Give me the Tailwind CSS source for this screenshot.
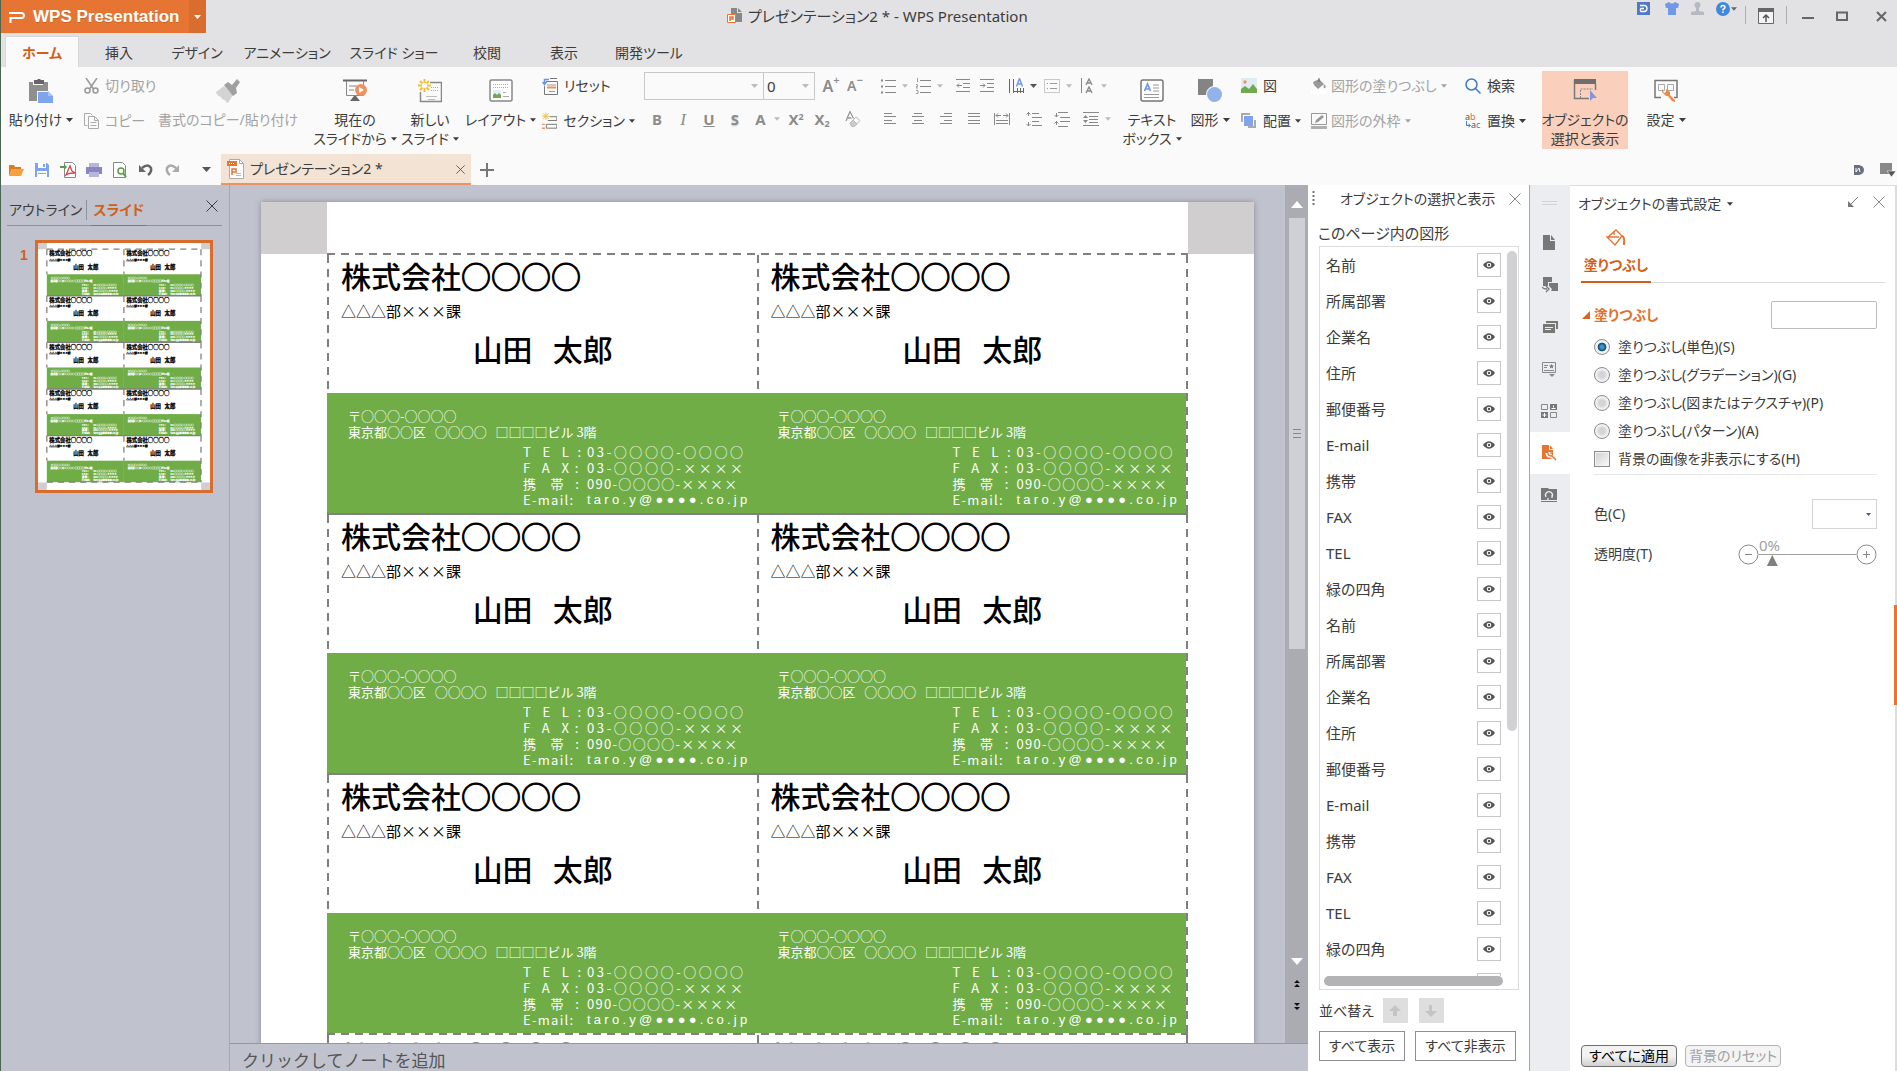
<!DOCTYPE html>
<html lang="ja">
<head>
<meta charset="utf-8">
<title>プレゼンテーション2 * - WPS Presentation</title>
<script src="https://cdn.jsdelivr.net/npm/@tailwindcss/browser@4"></script>
</head>
<body class="flex h-screen flex-col overflow-hidden border-l border-[#4a6652] bg-[#fafafa] font-['Noto_Sans','Noto_Sans_CJK_JP',sans-serif] text-sm leading-5 text-[#3c3c3c] [font-feature-settings:'palt']">

<svg class="hidden">
  <symbol id="caret" viewBox="0 0 7 4"><path d="M0 0h7L3.500 4z" fill="currentColor"/></symbol>
  <symbol id="eye" viewBox="0 0 14 10"><path d="M1 5q6-7.500 12 0q-6 7.500-12 0z" fill="#555"/><circle cx="7" cy="5" r="2.300" fill="#fff"/><circle cx="7" cy="5" r="1.200" fill="#555"/></symbol>
  <symbol id="close" viewBox="0 0 12 12"><path d="M.5.5l11 11M11.500.5l-11 11" stroke="currentColor" fill="none"/></symbol>
  <symbol id="card" viewBox="0 0 430 260" overflow="visible">
    <g stroke="#000" stroke-width="1.500">
      <text x="14" y="35" font-size="30" font-weight="700">株式会社○○○○</text>
      <text x="13" y="64" font-size="15" font-weight="700">△△△部×××課</text>
      <text x="147" y="108" font-size="30" font-weight="700">山田&#160;&#160;&#160;太郎</text>
    </g>
    <rect y="140" width="430" height="120" fill="#70ad47"/>
    <g fill="#fff" stroke="#fff" font-size="13" font-weight="700">
      <text x="21" y="168">〒○○○-○○○○</text>
      <text x="21" y="184">東京都○○区 ○○○○ □□□□ビル3階</text>
      <text x="196" y="205">T E L :</text><text x="260" y="205">03-○○○○-○○○○</text>
      <text x="196" y="221">F A X :</text><text x="260" y="221">03-○○○○-××××</text>
      <text x="196" y="237">携 帯 :</text><text x="260" y="237">090-○○○○-××××</text>
      <text x="196" y="253">E-mail:</text><text x="260" y="253">taro.y@●●●●.co.jp</text>
    </g>
  </symbol>
</svg>

<header class="shrink-0 bg-[#e2e2e4]">
  <div class="flex h-9 justify-between">
    <div class="flex h-[33px]">
      <button class="flex w-[188px] items-center bg-[#e67432] pl-2 font-['Liberation_Sans',sans-serif] text-[17px] font-bold text-white text-shadow-2xs">
        <svg class="mr-2 h-4 w-4" viewBox="0 0 16 16" fill="none" stroke="#fff" stroke-width="2"><path d="M0 4h12q3 0 3 2.500t-3 2.500H1.500V14"/></svg>WPS Presentation
      </button>
      <button class="flex w-[17px] items-center justify-center bg-[#d96c2f] text-white" aria-label="メニュー"><svg class="h-1 w-[7px]"><use href="#caret"/></svg></button>
    </div>
    <div class="flex items-center gap-1.5 pb-1 pl-[521px] text-[15px]">
      <svg class="h-4 w-[15px]" viewBox="0 0 15 16"><path d="M4 0h6v5h5v9H4z" fill="#888"/><path d="M11 0l4 4h-4z" fill="#888"/><path d="M.5 6.500h8v8h-8z" fill="#fff" stroke="#e67432"/><path d="M3 13V9h3v2H3" fill="none" stroke="#e67432" stroke-width="1.500"/></svg>
      <h1>プレゼンテーション2 * - WPS Presentation</h1>
    </div>
    <div class="ml-auto flex gap-3 pr-[10px] pt-[2px] text-[#666]">
      <button aria-label="ドキュメント" class="h-[13px]"><svg class="h-[13px] w-[13px]" viewBox="0 0 13 13"><path d="M0 0h13v13H0z" fill="#5478c8"/><path d="M3 3.500h4a3 3 0 010 6H4a2 2 0 010-3h3" fill="none" stroke="#fff" stroke-width="1.300"/></svg></button>
      <button aria-label="スキン" class="ml-[3px] h-[13px]"><svg class="h-[13px] w-[14px]" viewBox="0 0 14 13"><path d="M4 0q3 3 6 0l4 2-1 4h-2v7H3V6H1L0 2z" fill="#7097e8"/></svg></button>
      <button aria-label="アカウント" class="h-[13px]"><svg class="h-[13px] w-[13px]" viewBox="0 0 13 13"><circle cx="6.500" cy="3" r="3" fill="#b4b9c2"/><path d="M5 5h3v4l5 1v3H0v-3l5-1z" fill="#b4b9c2"/></svg></button>
      <button aria-label="ヘルプ" class="flex h-[13px] items-center gap-px"><svg class="h-[14px] w-[14px]" viewBox="0 0 14 14"><circle cx="7" cy="7" r="7" fill="#4088dc"/><path d="M5 5.500q0-2 2-2t2 1.800q0 1-2 2.200v1M7 9.500v1.600" stroke="#fff" stroke-width="1.500" fill="none"/></svg><svg class="h-1 w-[6px]"><use href="#caret"/></svg></button>
      <span class="-ml-1 mt-1 h-[18px] w-px bg-[#b0b0b4]"></span>
      <button aria-label="リボンを隠す" class="mt-1.5 h-4"><svg class="h-4 w-4" viewBox="0 0 16 16"><path d="M.5.5h15v15H.5z" fill="#f4f4f4" stroke="#666"/><path d="M0 0h16v4H0z" fill="#666"/><path d="M8 14V7M5 10l3-3 3 3" fill="none" stroke="#555" stroke-width="1.500"/></svg></button>
      <span class="mt-1 h-[18px] w-px bg-[#b0b0b4]"></span>
      <button aria-label="最小化" class="ml-[3px] mt-[14px] h-1"><svg class="h-[3px] w-3"><path d="M0 0h12v2H0z" fill="#666"/></svg></button>
      <button aria-label="最大化" class="ml-[10px] mt-[9px] h-[10px]"><svg class="h-[10px] w-3" viewBox="0 0 12 10"><path d="M1 1.500h10v7.500H1z" fill="none" stroke="#666" stroke-width="2"/></svg></button>
      <button aria-label="閉じる" class="ml-4 mt-[9px] h-[11px]"><svg class="h-[11px] w-[11px]" viewBox="0 0 11 11"><path d="M1 1l9 9M10 1l-9 9" stroke="#666" stroke-width="2"/></svg></button>
    </div>
  </div>
  <nav class="flex h-[31px] pl-1 text-center">
    <button class="w-[74px] border border-b-0 border-[#d8d8dc] bg-[#fafafa] pt-0.5 font-bold text-[#d35f17]">ホーム</button>
    <button class="w-20 pt-0.5">挿入</button>
    <button class="w-[76px] pt-0.5">デザイン</button>
    <button class="w-[104px] pt-0.5">アニメーション</button>
    <button class="w-[110px] pt-0.5">スライド ショー</button>
    <button class="w-[76px] pt-0.5">校閲</button>
    <button class="w-[78px] pt-0.5">表示</button>
    <button class="w-[92px] pt-0.5">開発ツール</button>
  </nav>
</header>

<section class="flex h-[87px] shrink-0 whitespace-nowrap pl-[3px] leading-[19px]" aria-label="リボン">
  <button class="mt-1 flex h-[78px] w-[74px] shrink-0 flex-col items-center pt-2">
    <svg class="h-6 w-6" viewBox="0 0 24 24"><path d="M0 3h4v3h10V3h5v9H8v10H0z" fill="#8f8f8f"/><path d="M5 1h3l1-1h2l1 1h3v4H5z" fill="#666"/><path d="M9 13h10l5 4v7H9z" fill="#7fa3ec"/><path d="M19 12l5 5h-5z" fill="#a9c2f5"/></svg>
    <span class="mt-[7px] flex items-center gap-1">貼り付け<svg class="h-1 w-[7px]"><use href="#caret"/></svg></span>
  </button>
  <div class="mt-px flex w-[80px] shrink-0 flex-col pl-1.5 text-[#a3a3a3]">
    <button class="flex h-[35px] items-center gap-1.5"><svg class="h-4 w-[15px]" viewBox="0 0 15 16" fill="none" stroke="#999" stroke-width="1.500"><path d="M2 0l7.500 11M13 0L5.500 11"/><circle cx="3.500" cy="12.500" r="2.500"/><circle cx="11.500" cy="12.500" r="2.500"/></svg>切り取り</button>
    <button class="flex h-[35px] items-center gap-1.5"><svg class="h-4 w-[15px]" viewBox="0 0 15 16" fill="none" stroke="#aaa"><path d="M3.500 12.500h-3V.5h6l2 2M4.500 3.500h6l4 4v8h-10zM10.500 3.500v4h4M6.500 9.500h6M6.500 12.500h6"/></svg>コピー</button>
  </div>
  <button class="mt-1 flex h-[78px] w-[140px] shrink-0 flex-col items-center pt-2 text-[#a3a3a3]">
    <svg class="h-6 w-6" viewBox="0 0 24 24"><path d="M0 13l8-6 9 9-5 8q-2 0-3-3-3 0-4-3-4-1-5-5z" fill="#d3d3d3"/><path d="M8 6l4-3 4 3 5-6 3 3-4 6 1 5-4 3z" fill="#a0a0a0"/></svg>
    <span class="mt-[7px]">書式のコピー/貼り付け</span>
  </button>
  <button class="ml-[15px] mt-1 flex h-[78px] w-[84px] shrink-0 flex-col items-center pt-2">
    <svg class="h-6 w-6" viewBox="0 0 24 24"><path d="M0 1.500h24" stroke="#666" stroke-width="2"/><path d="M3.500 2v14.500h17V2M6 7h8M6 11h5" fill="none" stroke="#888"/><path d="M11 17h2l4 5H7z" fill="#666"/><circle cx="18" cy="11" r="6" fill="#ee9160"/><path d="M16 8l5 3-5 3z" fill="#fff"/></svg>
    <span class="mt-[7px]">現在の</span><span class="flex items-center gap-1">スライドから<svg class="h-1 w-[6px]"><use href="#caret"/></svg></span>
  </button>
  <button class="mt-1 flex h-[78px] w-[66px] shrink-0 flex-col items-center pt-2">
    <svg class="h-6 w-6" viewBox="0 0 24 24"><path d="M12 3.500h11.500v19h-21V13" fill="none" stroke="#888" stroke-width="1.500"/><path d="M13 8.500h8M13 11.500h8" stroke="#aaa" stroke-dasharray="1 1"/><path d="M8 17.500h11M10 20.500h7" stroke="#bbb"/><path d="M6.500 0v4M6.500 9v4M0 6.500h4M9 6.500h4M2 2l2.500 2.500M8.500 8.500L11 11M11 2L8.500 4.500M4.500 8.500L2 11" stroke="#f5bd3a" stroke-width="2"/></svg>
    <span class="mt-[7px]">新しい</span><span class="flex items-center gap-1">スライド<svg class="h-1 w-[6px]"><use href="#caret"/></svg></span>
  </button>
  <button class="mt-1 flex h-[78px] w-[75px] shrink-0 flex-col items-center pt-2">
    <svg class="h-6 w-6" viewBox="0 0 24 24"><rect x="1" y="1" width="22" height="21" rx="1.500" fill="#fff" stroke="#888" stroke-width="1.500"/><path d="M4 5.500h16M4 8.500h16" stroke="#aaa" stroke-dasharray="1 1"/><path d="M4 11h8v8H4z" fill="#e0ecf6"/><path d="M4 19v-3l2-2 2 2 2-2 2 2v3z" fill="#72a850"/><path d="M14 13.500h3M14 17.500h6" stroke="#aaa"/></svg>
    <span class="mt-[7px] flex items-center gap-1">レイアウト<svg class="h-1 w-[6px]"><use href="#caret"/></svg></span>
  </button>
  <div class="mt-px flex w-[97px] shrink-0 flex-col pl-1">
    <button class="flex h-[35px] items-center gap-1.5"><svg class="h-[18px] w-4" viewBox="0 0 16 18" fill="none"><path d="M4 4.500h11.500v13h-13V9" stroke="#777"/><path d="M5 8h9M7 14.500h6" stroke="#999"/><path d="M5 10.500h9" stroke="#ee9160" stroke-width="2"/><path d="M7 2.500H2.500v5M.5 5l2 2.500 2-2.500" stroke="#6c93e6" stroke-width="1.500"/><path d="M8 1.500h7" stroke="#777"/></svg>リセット</button>
    <button class="flex h-[35px] items-center gap-1.5"><svg class="h-[18px] w-4" viewBox="0 0 16 18" fill="none"><path d="M8 4.500h7.500v4H6M4.500 12.500h11v4h-11z" stroke="#777"/><path d="M0 12.500h3M0 16.500h3" stroke="#ee9160" stroke-width="1.500"/><path d="M4 0v8M0 4h8M1 1l6 6M7 1L1 7" stroke="#f5bd3a"/></svg><span class="flex items-center gap-1">セクション<svg class="h-1 w-[6px]"><use href="#caret"/></svg></span></button>
  </div>

  <div class="mt-px w-[241px] shrink-0 pl-[9px] text-[#8c8c8c]">
    <div class="flex h-[35px] items-center">
      <label class="relative flex"><span class="sr-only">フォント</span><select class="h-7 w-[120px] appearance-none border border-[#c8c8c8] bg-[#fafafa] pl-1"><option></option></select><svg class="absolute right-1.5 top-3 h-1 w-[7px] text-[#bbb]"><use href="#caret"/></svg></label>
      <label class="relative -ml-px flex"><span class="sr-only">サイズ</span><select class="h-7 w-[52px] appearance-none border border-[#c8c8c8] bg-[#fafafa] pl-[3px] text-[15px] leading-6 text-[#3c3c3c]"><option>0</option></select><svg class="absolute right-1.5 top-3 h-1 w-[7px] text-[#bbb]"><use href="#caret"/></svg></label>
      <button class="ml-1 flex w-6 items-start justify-center text-base font-semibold leading-6">A<span class="text-[11px] leading-3">+</span></button>
      <button class="flex w-6 items-start justify-center text-sm font-semibold leading-6">A<span class="text-[11px] leading-3">−</span></button>
    </div>
    <div class="flex h-8 items-center text-[15px] font-bold">
      <button class="w-[26px]">B</button>
      <button class="w-[26px] font-['Liberation_Serif',serif] text-[17px] font-normal italic">I</button>
      <button class="w-[26px] underline">U</button>
      <button class="w-[26px] text-shadow-sm">S</button>
      <button class="flex w-[35px] items-center justify-center gap-2 pl-1">A<svg class="h-1 w-[6px] text-[#bbb]"><use href="#caret"/></svg></button>
      <button class="w-[26px]">X<sup class="text-[9px]">2</sup></button>
      <button class="w-[26px]">X<sub class="text-[9px]">2</sub></button>
      <button class="flex w-9 justify-center" aria-label="書式のクリア"><svg class="h-4 w-4" viewBox="0 0 16 16" fill="none" stroke="#999"><path d="M1 10L5 .5l3.500 7M2.500 7h4" stroke-width="1.300"/><path d="M5 12l6-6 4 3.500-5.500 6H7z" stroke="#bbb"/><path d="M5 12l3-3 4 4-2.500 2.500H7z" fill="#ccc" stroke="#bbb"/></svg></button>
    </div>
  </div>

  <div class="mt-px w-[239px] shrink-0 text-[#bbb]">
    <div class="flex h-[35px] items-center">
      <button class="flex w-9 items-center justify-end gap-[6px]" aria-label="箇条書き"><svg class="h-4 w-[15px]" viewBox="0 0 15 16"><path d="M4 2.500h11M4 8.500h11M4 14.500h11" stroke="#888"/><path d="M0 1.500h2v2H0zM0 7.500h2v2H0zM0 13.500h2v2H0z" fill="#888"/></svg><svg class="mr-1 h-1 w-[6px]"><use href="#caret"/></svg></button>
      <button class="flex w-[35px] items-center justify-end gap-[6px]" aria-label="段落番号"><svg class="h-4 w-[15px]" viewBox="0 0 15 16"><path d="M4 2.500h11M4 8.500h11M4 14.500h11" stroke="#888"/><path d="M1.500 0v4M0 6.500h1.500v2H0v1.500h2M0 12.500h2v3H0" fill="none" stroke="#888" stroke-width=".8"/></svg><svg class="mr-1 h-1 w-[6px]"><use href="#caret"/></svg></button>
      <button class="ml-[2px] flex w-7 justify-center" aria-label="インデント解除"><svg class="h-[13px] w-[14px]" viewBox="0 0 14 13" fill="none" stroke="#888"><path d="M0 .5h14M7 4.500h7M7 8.500h7M0 12.500h14M1 6.500h5M3 4.500l-2 2 2 2"/></svg></button>
      <button class="flex w-5 justify-center" aria-label="インデント"><svg class="h-[13px] w-[14px]" viewBox="0 0 14 13" fill="none" stroke="#888"><path d="M0 .5h14M7 4.500h7M7 8.500h7M0 12.500h14M0 6.500h5M3 4.500l2 2-2 2"/></svg></button>
      <button class="flex w-10 items-center justify-end gap-[6px] text-[#555]" aria-label="文字列の方向"><svg class="h-4 w-4" viewBox="0 0 16 16" fill="none"><path d="M1.500 1v14M5.500 1v14M9.500 10v5M12.500 10v5M15.500 10v5M5 13.500h11" stroke="#666"/><path d="M8.500 8.500l3-8 3 8M9.500 6h4" stroke="#7097e8" stroke-width="1.400"/></svg><svg class="h-1 w-[7px]"><use href="#caret"/></svg></button>
      <button class="flex w-[35px] items-center justify-end gap-[6px]" aria-label="文字の配置"><svg class="h-[14px] w-4" viewBox="0 0 16 14" fill="none" stroke="#999"><path d="M.5.5h15v13H.5z" stroke-dasharray="1 1"/><path d="M3 4.500h1M6 4.500h7M3 9.500h1M6 9.500h7"/></svg><svg class="h-1 w-[6px]"><use href="#caret"/></svg></button>
      <button class="flex w-[35px] items-center justify-end gap-[8px]" aria-label="縦書き"><svg class="h-4 w-3" viewBox="0 0 12 16" fill="none" stroke="#888"><path d="M.5 0v15"/><path d="M5 7l3-6 3 6M6 5h4M5 15l3-6 3 6M6 13h4" stroke-width="1.300"/></svg><svg class="h-1 w-[6px]"><use href="#caret"/></svg></button>
    </div>
    <div class="flex h-8 items-center">
      <button class="flex w-7 justify-center" aria-label="左揃え"><svg class="h-3 w-3" viewBox="0 0 12 12"><path d="M0 .5h8M0 3.500h12M0 7.500h8M0 10.500h12" stroke="#888"/></svg></button>
      <button class="flex w-7 justify-center" aria-label="中央揃え"><svg class="h-3 w-3" viewBox="0 0 12 12"><path d="M2 .5h8M0 3.500h12M2 7.500h8M0 10.500h12" stroke="#888"/></svg></button>
      <button class="flex w-7 justify-center" aria-label="右揃え"><svg class="h-3 w-3" viewBox="0 0 12 12"><path d="M4 .5h8M0 3.500h12M4 7.500h8M0 10.500h12" stroke="#888"/></svg></button>
      <button class="flex w-7 justify-center" aria-label="両端揃え"><svg class="h-3 w-3" viewBox="0 0 12 12"><path d="M0 .5h12M0 3.500h12M0 7.500h12M0 10.500h12" stroke="#888"/></svg></button>
      <button class="flex w-7 justify-center" aria-label="均等割り付け"><svg class="h-3 w-4" viewBox="0 0 16 12" fill="none" stroke="#888"><path d="M.5 0v12M15.500 0v12M2 2.500h5M9 2.500h5M4 .5l-2 2 2 2M12 .5l2 2-2 2M2 7.500h12M2 10.500h12"/></svg></button>
      <button class="ml-1 flex w-7 justify-center" aria-label="段落前"><svg class="h-[15px] w-4" viewBox="0 0 16 15" fill="none" stroke="#888"><path d="M6 1.500h7M6 5.500h10M6 9.500h7M6 13.500h10M2.500 0v4M2.500 10v4M.5 2.500l2-2 2 2M.5 12l2 2 2-2"/></svg></button>
      <button class="flex w-[27px] justify-center" aria-label="段落後"><svg class="h-[15px] w-4" viewBox="0 0 16 15" fill="none" stroke="#888"><path d="M4 .5h10M6 5.500h10M6 9.500h10M4 14.500h10M2.500 1v4M2.500 9v4M.5 3l2 2 2-2M.5 11.500l2-2 2 2"/></svg></button>
      <button class="flex w-[36px] items-center justify-end gap-[6px]" aria-label="行間"><svg class="h-[14px] w-4" viewBox="0 0 16 14" fill="none" stroke="#888"><path d="M0 .5h16M6 4.500h9M6 7.500h9M6 10.500h9M0 13.500h16"/><path d="M0 6l2.500-3L5 6zM0 8l2.500 3L5 8z" fill="#888" stroke="none"/></svg><svg class="h-1 w-[6px]"><use href="#caret"/></svg></button>
    </div>
  </div>

  <button class="ml-[6px] mt-1 flex h-[78px] w-[62px] shrink-0 flex-col items-center pt-2">
    <svg class="h-6 w-6" viewBox="0 0 24 24"><rect x="1" y="1" width="22" height="21" rx="2" fill="#fff" stroke="#777" stroke-width="1.500"/><path d="M4.500 12l3-7 3 7M5.500 10h4" fill="none" stroke="#7097e8" stroke-width="1.700"/><path d="M13 6h6M13 9h6M13 12h6M4 15.500h15M4 18.500h15" stroke="#999"/></svg>
    <span class="mt-[7px]">テキスト</span><span class="flex items-center gap-1">ボックス<svg class="h-1 w-[6px]"><use href="#caret"/></svg></span>
  </button>
  <button class="mt-1 flex h-[78px] w-[54px] shrink-0 flex-col items-center pt-2">
    <svg class="h-6 w-6" viewBox="0 0 24 24"><path d="M0 0h15v7q-7 2-7 9H0z" fill="#848484"/><circle cx="16.500" cy="15.500" r="7.500" fill="#92b3ea"/></svg>
    <span class="mt-[7px] flex items-center gap-1">図形<svg class="h-1 w-[7px]"><use href="#caret"/></svg></span>
  </button>
  <div class="mt-px flex w-[74px] shrink-0 flex-col pl-[4px]">
    <button class="flex h-[35px] items-center gap-1.5"><svg class="h-4 w-4" viewBox="0 0 16 16"><path d="M0 0h16v15H0z" fill="#e0ecf4"/><circle cx="4" cy="4" r="1.700" fill="#ee9160"/><path d="M0 15v-4l4-3 4 3 4-5 4 5v4z" fill="#72a850"/></svg>図</button>
    <button class="flex h-[35px] items-center gap-1.5"><svg class="h-4 w-4" viewBox="0 0 16 16"><path d="M0 0h9v2H2v7H0zM15 15H7v-2h6V7h2z" fill="#aaa"/><path d="M3 3h9v10H3z" fill="#7fa3ec"/></svg><span class="flex items-center gap-1">配置<svg class="h-1 w-[6px]"><use href="#caret"/></svg></span></button>
  </div>
  <div class="mt-px flex w-[148px] shrink-0 flex-col text-[#a3a3a3]">
    <button class="flex h-[35px] items-center gap-1"><svg class="h-4 w-4" viewBox="0 0 16 16"><path d="M0 12h16v4H0z" fill="#fff"/><path d="M2 4l6-3 5 5-6 5-4-4zM13 6q3 3 1 4t-1-4z" fill="#999"/><path d="M8 0v4" stroke="#666"/></svg><span class="flex items-center gap-1">図形の塗りつぶし<svg class="h-1 w-[6px]"><use href="#caret"/></svg></span></button>
    <button class="flex h-[35px] items-center gap-1"><svg class="h-4 w-4" viewBox="0 0 16 16"><path d="M.5.5h15v11H.5z" fill="none" stroke="#999"/><path d="M4 10l1-3 6-5 2 2-6 5z" fill="#999"/><path d="M0 13h16v3H0z" fill="#b0b0b0"/></svg><span class="flex items-center gap-1">図形の外枠<svg class="h-1 w-[6px]"><use href="#caret"/></svg></span></button>
  </div>
  <div class="mt-px flex w-[83px] shrink-0 flex-col pl-[6px]">
    <button class="flex h-[35px] items-center gap-1.5"><svg class="h-4 w-4" viewBox="0 0 16 16" fill="none" stroke="#3d7bc8" stroke-width="1.500"><circle cx="6.500" cy="6.500" r="5.500"/><path d="M10.500 10.500l5 5"/></svg>検索</button>
    <button class="flex h-[35px] items-center gap-1.5"><svg class="h-4 w-4 overflow-visible font-['Noto_Sans']" viewBox="0 0 16 16"><text x="0" y="7" font-size="9" fill="#555">a<tspan fill="#d9762f">b</tspan></text><text x="6" y="15" font-size="9" fill="#555">a<tspan fill="#3d7bc8">c</tspan></text><path d="M1.500 8v4.500H5M3.500 11l2 1.500-2 1.500" fill="none" stroke="#3d7bc8"/></svg><span class="flex items-center gap-1">置換<svg class="h-1 w-[7px]"><use href="#caret"/></svg></span></button>
  </div>
  <button class="mt-1 flex h-[78px] w-[86px] shrink-0 flex-col items-center bg-[#fad0bd] pt-2">
    <svg class="h-6 w-6" viewBox="0 0 24 24"><path d="M1.500 1v18.500H16M22.500 5v6" fill="none" stroke="#777" stroke-width="1.500"/><path d="M1 0h22v5H1z" fill="#6e6e6e"/><path d="M7.500 19v-9H20" fill="none" stroke="#888" stroke-dasharray="2 1"/><path d="M17 11v11l3-3h4z" fill="#7f97e0"/></svg>
    <span class="mt-[7px]">オブジェクトの</span><span>選択と表示</span>
  </button>
  <button class="ml-1 mt-1 flex h-[78px] w-[68px] shrink-0 flex-col items-center pt-2">
    <svg class="h-6 w-6" viewBox="0 0 24 24"><path d="M7 18.500H1v-17h22v17h-3" fill="none" stroke="#777" stroke-width="1.500"/><path d="M4.500 5.500h6v6h-6zM13.500 5.500h6v6h-6z" fill="none" stroke="#aaa"/><path d="M8 10v3l4 4h2l4 5 3 1v-2l-5-5v-3l-4-3v3l-2 1z" fill="#ee8a4a"/></svg>
    <span class="mt-[7px] flex items-center gap-1">設定<svg class="h-1 w-[7px]"><use href="#caret"/></svg></span>
  </button>
</section>

<div class="flex h-[31px] shrink-0 items-center">
  <div class="flex w-[220px] items-center gap-[10px] pl-[7px]">
    <button aria-label="開く"><svg class="h-4 w-4" viewBox="0 0 16 16"><path d="M1 14V3h5l1 2h6v2H4z" fill="#e07a20"/><path d="M4 7h12l-3 7H1z" fill="#f7a13d"/></svg></button>
    <button aria-label="保存"><svg class="h-4 w-4" viewBox="0 0 16 16"><path d="M1 1h12l2 2v12H1z" fill="#7fa3ec"/><path d="M4 1h8v5H4zM3 9h10v6H3z" fill="#fff"/><path d="M9 2h2v3H9zM4 11h8v1H4z" fill="#7fa3ec"/></svg></button>
    <button aria-label="PDF出力"><svg class="h-4 w-4" viewBox="0 0 16 16"><path d="M4.500.5h8l3 3v12h-11z" fill="#fff" stroke="#888"/><path d="M6 13l4-9 2 5 3 2-6 .5z" fill="none" stroke="#d9434a" stroke-width="1.300"/><path d="M0 4h4V2l3 3-3 3V6H0z" fill="#5b9b45"/></svg></button>
    <button aria-label="印刷"><svg class="h-4 w-4" viewBox="0 0 16 16"><path d="M3 1h10v4H3z" fill="#b9b6dc"/><path d="M0 5h16v7H0z" fill="#8a86c4"/><path d="M3 10h10v5H3z" fill="#b9b6dc"/></svg></button>
    <button aria-label="プレビュー"><svg class="h-4 w-4" viewBox="0 0 16 16"><path d="M1.500.5h9l3 3v12h-12z" fill="#fff" stroke="#888"/><circle cx="9" cy="9" r="3" fill="none" stroke="#5b9b45" stroke-width="1.500"/><path d="M11 11l3 4" stroke="#5b9b45" stroke-width="2"/></svg></button>
    <button aria-label="元に戻す"><svg class="h-4 w-4" viewBox="0 0 16 16"><path d="M4 6q6-5 9 0 1 4-3 7" fill="none" stroke="#666" stroke-width="2.500"/><path d="M1 3v7h7z" fill="#666"/></svg></button>
    <button aria-label="やり直し"><svg class="h-4 w-4" viewBox="0 0 16 16"><path d="M12 6Q6 1 3 6q-1 4 3 7" fill="none" stroke="#aaa" stroke-width="2.500"/><path d="M15 3v7H8z" fill="#aaa"/></svg></button>
    <button class="ml-3 text-[#555]" aria-label="カスタマイズ"><svg class="h-[5px] w-[9px]"><path d="M0 0h9L4.500 5z" fill="currentColor"/></svg></button>
  </div>
  <div class="flex h-full w-[250px] items-center border-b-2 border-[#e99465] bg-[#f2e3d4] px-[6px] pt-px">
    <svg class="h-5 w-[17px]" viewBox="0 0 17 20"><path d="M2.500.5h10l4 4v15h-14z" fill="#fff" stroke="#aaa"/><path d="M12.500.5v4h4" fill="none" stroke="#aaa"/><path d="M0 2h10v5H0z" fill="#e67432"/><path d="M2 4.500h6" stroke="#fff" stroke-dasharray="1 1"/><path d="M5 16v-6h4v3H5" fill="none" stroke="#e67432" stroke-width="1.500"/><path d="M9 14.500h5M9 16.500h5" stroke="#bbb"/></svg>
    <span class="ml-1.5">プレゼンテーション2 *</span>
    <button class="ml-auto" aria-label="タブを閉じる"><svg class="h-[9px] w-[9px]" viewBox="0 0 12 12"><use href="#close"/></svg></button>
  </div>
  <button class="ml-[9px]" aria-label="新しいタブ"><svg class="h-[14px] w-[14px]"><path d="M7 0v14M0 7h14" stroke="#777" stroke-width="2"/></svg></button>
  <div class="ml-auto flex items-center gap-4">
    <svg class="h-3 w-[10px]" viewBox="0 0 10 12"><path d="M0 1h5q5 1 5 5t-5 5H0z" fill="#6b7080"/><path d="M2 4v4l3-4 1 4" fill="none" stroke="#fff"/></svg>
    <svg class="mr-px h-[14px] w-4" viewBox="0 0 16 14"><path d="M0 0h12v11H0z" fill="#888"/><path d="M7 8h9l-4.500 6z" fill="#555" stroke="#fafafa" stroke-width=".6"/></svg>
  </div>
</div>

<main class="flex min-h-0 flex-1 bg-[#c0c3cd]">
  <aside class="flex w-[229px] shrink-0 flex-col border-r border-[#a5a7b2] pl-1.5 pr-[7px] pt-[9px]">
    <div class="flex h-8 items-center border-b border-[#8f919c]">
      <button class="border-r border-[#8f919c] pl-[2px] pr-1">アウトライン</button>
      <button class="ml-1 -mb-px h-8 border-b border-[#d35f17] px-[2px] font-bold text-[#d35f17]">スライド</button>
      <button class="mb-2 ml-auto mr-1" aria-label="閉じる"><svg class="h-3 w-3"><use href="#close"/></svg></button>
    </div>
    <div class="mt-[14px] flex">
      <span class="w-7 pl-[13px] pt-[5px] font-['Liberation_Sans'] font-bold text-[#d35f17]">1</span>
      <svg class="h-[253px] w-[178px] font-['Noto_Sans_CJK_JP']" viewBox="0 0 993 1411" id="thumb" role="img" aria-label="スライド1"></svg>
    </div>
  </aside>

  <section class="flex min-w-0 flex-1 flex-col">
    <div class="flex min-h-0 flex-1">
      <div class="min-w-0 flex-1 overflow-hidden">
        <div class="mx-auto mt-[17px] w-[993px] bg-white font-['Noto_Sans_CJK_JP',sans-serif] text-black shadow-[0_0_6px_#8a8c96] [font-feature-settings:normal]">
          <div class="flex h-[51px] justify-between"><span class="h-[52px] w-[66px] bg-[#d0cece]"></span><span class="h-[52px] w-[66px] bg-[#d0cece]"></span></div>
          <div class="mx-[66px] flex flex-col" id="cards"></div>
        </div>
      </div>
      <div class="flex w-[23px] shrink-0 flex-col items-center bg-[#ababb4]">
        <svg class="mt-4 h-[7px] w-[12px]"><path d="M6 0l6 7H0z" fill="#fff"/></svg>
        <div class="mt-[10px] flex h-[431px] w-4 items-center justify-center bg-[#cfd0d5]"><svg class="h-[9px] w-2"><path d="M0 .5h8M0 4.500h8M0 8.500h8" stroke="#888"/></svg></div>
        <svg class="mt-auto h-[7px] w-[12px]"><path d="M0 0h12L6 7z" fill="#fff"/></svg>
        <svg class="mt-[15px] h-2 w-[6px]"><path d="M3 0l3 3H0zM3 4l3 3H0z" fill="#111"/></svg>
        <svg class="mb-8 mt-[15px] h-2 w-[6px]"><path d="M0 0h6L3 3zM0 4h6L3 7z" fill="#111"/></svg>
      </div>
    </div>
    <div class="h-7 shrink-0 overflow-hidden border-t border-[#9496a2] pl-3 font-['Noto_Sans_CJK_JP',sans-serif] text-[17px] leading-8 text-[#555] [font-feature-settings:normal]">クリックしてノートを追加</div>
  </section>

  <aside class="flex w-[221px] shrink-0 flex-col bg-white">
    <div class="flex h-[36px] items-center pb-2 pl-1">
      <svg class="h-4 w-[3px]"><path d="M1.500 0v16" stroke="#777" stroke-width="2" stroke-dasharray="2 2"/></svg>
      <h2 class="ml-[25px]">オブジェクトの選択と表示</h2>
      <button class="ml-auto mr-2 text-[#888]" aria-label="閉じる"><svg class="h-3 w-3"><use href="#close"/></svg></button>
    </div>
    <h3 class="h-[25px] pl-[10px] text-[15px] leading-6">このページ内の図形</h3>
    <div class="relative ml-[11px] mr-[10px] min-h-0 flex-1 overflow-hidden border border-[#dcdcdc]">
      <ul id="shapes" class="pl-[6px]"></ul>
      <div class="absolute right-px top-1 h-[480px] w-[10px] rounded-full bg-[#d1d1d4]"></div>
      <div class="absolute bottom-0 left-0 w-full bg-white pb-[3px] pl-1"><div class="h-[10px] w-[179px] rounded-full bg-[#b3b3b5]"></div></div>
    </div>
    <div class="flex h-[41px] items-center pl-[11px]">
      <span>並べ替え</span>
      <button class="ml-[9px] flex h-[25px] w-[25px] items-center justify-center bg-[#dedede]" aria-label="上へ"><svg class="h-3 w-3"><path d="M6 0l6 6H8v5H4V6H0z" fill="#c4c4c4"/></svg></button>
      <button class="ml-[11px] flex h-[25px] w-[25px] items-center justify-center bg-[#dedede]" aria-label="下へ"><svg class="h-3 w-3"><path d="M6 12L0 6h4V0h3v6h5z" fill="#c4c4c4"/></svg></button>
    </div>
    <div class="mb-[10px] flex gap-[10px] pl-[11px]">
      <button class="h-[30px] w-[86px] border border-[#8e8e94]">すべて表示</button>
      <button class="h-[30px] w-[101px] border border-[#8e8e94]">すべて非表示</button>
    </div>
  </aside>

  <nav class="flex w-[41px] shrink-0 flex-col items-center border-l border-[#a5a7b2] bg-[#ecedf0]">
    <svg class="mt-4 h-4 w-4"><path d="M0 .5h15M0 3.500h15" stroke="#cfd3de"/></svg>
    <button class="mt-[5px] flex h-[42px] w-full items-center justify-center pr-[3px]" aria-label="新規"><svg class="h-4 w-3" viewBox="0 0 12 16"><path d="M0 0h7v6h5v9H0z" fill="#777"/><path d="M8 0l4 5H8z" fill="#777"/></svg></button>
    <button class="flex h-[42px] w-full items-center justify-center pr-px" aria-label="切り替え"><svg class="h-4 w-4" viewBox="0 0 16 16"><path d="M1 0h9v5H6v4H1zM7 6h9v8H9l1-2-3-3z" fill="#777"/><path d="M0 10q1 2 5 2M4 9l3 3-3 3" fill="none" stroke="#777" stroke-width="1.300"/></svg></button>
    <button class="flex h-[42px] w-full items-center justify-center pr-px" aria-label="レイアウト"><svg class="h-4 w-4" viewBox="0 0 16 16"><path d="M4 2h12v8h-2V4H4zM1 5h12v9H1z" fill="#777"/><path d="M3 8.500h8M3 10.500h6" stroke="#ecedf0"/></svg></button>
    <button class="flex h-[42px] w-full items-center justify-center pr-[2px]" aria-label="アニメーション"><svg class="h-4 w-4" viewBox="0 0 16 16" fill="none" stroke="#888"><path d="M1.500 1.500h13v10h-13zM3 4.500h4M3 6.500h3M3 9.500h10"/><path d="M10.500 3l.8 1.500h1.700l-1.300 1.200.5 1.800-1.700-1-1.700 1 .5-1.800L8 4.500h1.700z" fill="#777" stroke="none"/><path d="M8 13h6l-3 3z" fill="#888" stroke="none"/></svg></button>
    <button class="flex h-[42px] w-full items-center justify-center pr-[3px]" aria-label="図形"><svg class="h-4 w-4" viewBox="0 0 16 16" fill="none" stroke="#888"><path d="M.5 1.500h6v5h-6zM9.500 9.500h6v5h-6z"/><path d="M9 1h7v6H9zM0 9h7v6H0z" fill="#777" stroke="none"/><path d="M12.500 2.500v2M10.500 5.500h4M3.500 10v4M1.500 12h4" stroke="#fff"/></svg></button>
    <button class="flex h-[42px] w-full items-center justify-center bg-white pr-[2px]" aria-label="書式設定"><svg class="h-4 w-4" viewBox="0 0 16 16"><path d="M1 0h7v5h4v9H1z" fill="#e67432"/><path d="M9 0l3 4H9z" fill="#e67432"/><path d="M6 8q0 4 4 3l5 5M9 7v2H7" fill="none" stroke="#fff" stroke-width="3"/><path d="M7 8q0 3 4 3l4 4M10 7.500V9" fill="none" stroke="#e67432" stroke-width="1.500"/></svg></button>
    <button class="flex h-[42px] w-full items-center justify-center pr-[3px]" aria-label="バックアップ"><svg class="h-4 w-4" viewBox="0 0 16 16"><path d="M0 1h7l1 1h8v11H0zM0 14h16v1H0z" fill="#777"/><path d="M5 10a3.500 3.500 0 116 0M11 11V8M7 13v-2" fill="none" stroke="#ecedf0" stroke-width="1.300"/></svg></button>
  </nav>

  <aside class="flex w-[327px] shrink-0 border-t border-[#dcdcdc] bg-white">
    <div class="flex min-w-0 flex-1 flex-col pb-1 pl-2 pr-[10px]">
      <div class="flex items-center pt-1.5">
        <h2 class="leading-6">オブジェクトの書式設定</h2>
        <svg class="ml-1.5 h-1 w-[6px]"><use href="#caret"/></svg>
        <button class="mb-1 ml-auto" aria-label="固定解除"><svg class="h-[11px] w-3"><path d="M11 0L4 7" stroke="#777"/><path d="M1 4v6h6z" fill="#777"/></svg></button>
        <button class="mb-1 ml-[14px] text-[#888]" aria-label="閉じる"><svg class="h-3 w-3"><use href="#close"/></svg></button>
      </div>
      <div class="ml-[3px] flex border-b border-[#dcdcdc]">
        <button class="-mb-px flex w-[70px] flex-col items-center border-b-2 border-[#d35f17] pt-[13px] font-bold text-[#d35f17]">
          <svg class="h-[18px] w-5" viewBox="0 0 20 18" fill="none" stroke="#e67432" stroke-width="1.400"><path d="M2 8l8-7 6 6-7 9-8-8h12M8 6V2"/><path d="M16 7q3 1 2 9v-4" stroke-width="2"/></svg>
          <span class="mb-1.5 mt-2">塗りつぶし</span>
        </button>
      </div>
      <div class="mt-[18px] flex h-[28px] items-center pl-1 pr-2">
        <svg class="h-2 w-2"><path d="M8 0v8H0z" fill="#d9661f"/></svg>
        <span class="ml-1 font-bold text-[#e0702c]" id="fill-label">塗りつぶし</span>
        <input type="text" aria-labelledby="fill-label" class="ml-auto h-7 w-[106px] rounded-xs border border-[#bdbdbd]">
      </div>
      <div class="mt-1 flex flex-col pl-4" id="fills"></div>
      <div class="ml-4 mr-2 mt-px border-t border-[#e6e6e6]"></div>
      <div class="mt-6 flex items-center justify-between pl-4 pr-2">
        <label for="color">色(C)</label>
        <span class="relative flex"><select id="color" class="h-[30px] w-[65px] appearance-none border border-[#d4d4d8]"><option></option></select><svg class="absolute right-[6px] top-[14px] h-[3px] w-[5px]"><path d="M0 0h5L2.500 3z" fill="#4a5a80"/></svg></span>
      </div>
      <div class="mt-3 flex h-[26px] items-center pl-4 pr-2">
        <label for="alpha">透明度(T)</label>
        <button class="ml-auto" aria-label="減らす"><svg class="h-[21px] w-[21px]" fill="none" stroke="#888"><circle cx="10.500" cy="10.500" r="9.500"/><path d="M7 10.500h7"/></svg></button>
        <span class="relative h-[22px] w-[97px]">
          <output class="absolute -top-2 left-0 text-[15px] text-[#a0a0a0]">0%</output>
          <input id="alpha" type="range" min="-10" max="100" value="0" class="mt-[11px] block h-3 w-full appearance-none bg-transparent [&::-webkit-slider-runnable-track]:h-3 [&::-webkit-slider-runnable-track]:border-t [&::-webkit-slider-runnable-track]:border-[#a0a0a0] [&::-webkit-slider-thumb]:h-[11px] [&::-webkit-slider-thumb]:w-[11px] [&::-webkit-slider-thumb]:appearance-none [&::-webkit-slider-thumb]:bg-[#808080] [&::-webkit-slider-thumb]:[clip-path:polygon(50%_0,100%_100%,0_100%)]">
        </span>
        <button aria-label="増やす"><svg class="h-[21px] w-[21px]" fill="none" stroke="#888"><circle cx="10.500" cy="10.500" r="9.500"/><path d="M7 10.500h7M10.500 7v7"/></svg></button>
      </div>
      <div class="mt-auto flex gap-2 pl-[3px]">
        <button class="h-[22px] w-24 rounded-sm border border-[#6e6e6e] bg-linear-to-b from-[#f2f2f2] from-50% to-[#d0d0d0] leading-4 text-black">すべてに適用</button>
        <button class="h-[22px] w-24 rounded-sm border border-[#b5b5b5] bg-[#f4f4f4] leading-4 text-[#a0a0a0]" disabled>背景のリセット</button>
      </div>
    </div>
    <div class="w-[2px] bg-[#dcdcdc] pt-[419px]"><div class="-ml-px h-[100px] w-[3px] bg-[#e67432]"></div></div>
  </aside>
</main>

<script>
  const dashV = '<span class="w-[2px] shrink-0 bg-[repeating-linear-gradient(#808080_0_8px,#fff_8px_14px)]"></span>';
  const dashH = '<span class="h-[2px] bg-[repeating-linear-gradient(90deg,#808080_0_8px,#fff_8px_14px)]"></span>';
  const solid = '<span class="h-[2px] bg-[#808080]"></span>';
  const front = `<div class="h-[138px] flex-1 pl-3 pt-[2px]">
      <p class="text-[30px] font-medium leading-9">株式会社<span class="[-webkit-text-stroke:1px_#000]">○○○○</span></p>
      <p class="mt-2 text-[15px] leading-5">△△△部×××課</p>
      <p class="mt-[9px] pr-3 text-center text-[30px] font-medium leading-9">山田&nbsp;&nbsp;&nbsp;太郎</p>
    </div>`;
  const back = `<div class="h-[120px] flex-1 pl-[21px] pt-[15px] text-[13px] leading-4 text-white">
      <p>〒○○○-○○○○</p>
      <p>東京都○○区&nbsp;&nbsp; ○○○○&nbsp;&nbsp; □□□□ビル 3階</p>
      <dl class="mt-[4px] grid grid-cols-[64px_1fr] whitespace-pre pl-[175px]">
        <dt>T    E    L   :</dt><dd class="tracking-[0.2em]">03-○○○○-○○○○</dd>
        <dt>F    A    X  :</dt><dd class="tracking-[0.2em]">03-○○○○-××××</dd>
        <dt>携     帯    :</dt><dd class="tracking-widest">090-○○○○-××××</dd>
        <dt class="tracking-widest">E-mail:</dt><dd class="font-['Liberation_Sans'] tracking-[0.25em]">taro.y@●●●●.co.jp</dd>
      </dl>
    </div>`;
  let html = '', thumb = '<rect width="993" height="1411" fill="#fff"/><path d="M0 0h66v51H0zM927 0h66v51h-66zM0 1352h66v60H0zM927 1352h66v60h-66z" fill="#d0cece"/>';
  for (let i = 0; i < 5; i++) {
    html += (i === 0 || i === 3 ? dashH : solid)
      + `<div class="flex">${dashV}${front}${dashV}${front}${dashV}</div>`
      + `<div class="flex"><div class="flex flex-1 bg-[#70ad47]">${back}${back}</div>${dashV}</div>`;
    const y = 51 + i * 260;
    thumb += `<use href="#card" x="66" y="${y}" width="430" height="260"/><use href="#card" x="496" y="${y}" width="430" height="260"/>`;
    if (i) thumb += `<path d="M66 ${y}h861" stroke="#808080" stroke-width="8"/>`;
    thumb += `<path d="M66 ${y}v140M496 ${y}v140M926 ${y}v260" stroke="#808080" stroke-width="7" stroke-dasharray="34 28"/>`;
  }
  document.getElementById('cards').innerHTML = html + dashH;
  thumb += '<path d="M66 51h861M66 1351h861" fill="none" stroke="#808080" stroke-width="7" stroke-dasharray="34 28"/><rect x="8" y="8" width="977" height="1395" fill="none" stroke="#d96c2b" stroke-width="17"/>';
  document.getElementById('thumb').innerHTML = thumb;

  const names = ['名前', '所属部署', '企業名', '住所', '郵便番号', 'E-mail', '携帯', 'FAX', 'TEL', '緑の四角'];
  document.getElementById('shapes').innerHTML = [...names, ...names, ''].map(n =>
    `<li class="flex h-9 items-center text-[15px]"><span>${n}</span><button class="ml-auto mr-[17px] flex h-6 w-6 items-center justify-center border border-[#c8c8c8]" aria-label="${n}の表示"><svg class="h-[10px] w-[14px]"><use href="#eye"/></svg></button></li>`).join('');

  const fills = ['塗りつぶし(単色)(S)', '塗りつぶし(グラデーション)(G)', '塗りつぶし(図またはテクスチャ)(P)', '塗りつぶし(パターン)(A)'];
  document.getElementById('fills').innerHTML = fills.map((f, i) =>
    `<label class="flex h-7 items-center gap-2"><input type="radio" name="fill" ${i ? '' : 'checked'} class="h-4 w-4 appearance-none rounded-full border border-[#8c8c8c] bg-[radial-gradient(#d4d4d8_30%,#f2f2f2_60%)] checked:bg-[radial-gradient(#2f9bd8_15%,#14466e_40%,#f2f2f2_48%)]">${f}</label>`).join('')
    + `<label class="flex h-7 items-center gap-2"><input type="checkbox" class="h-4 w-4 appearance-none border border-[#8c8c8c] bg-linear-to-br from-[#cfcfd4] to-[#fafafa] ring-1 ring-[#f2f2f2] ring-inset">背景の画像を非表示にする(H)</label>`;
</script>
</body>
</html>
